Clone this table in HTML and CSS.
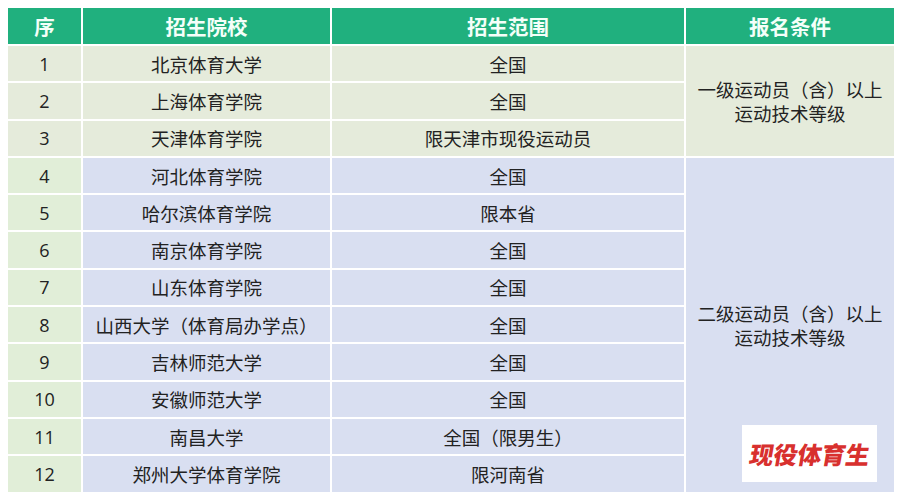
FILE: index.html
```html
<!DOCTYPE html>
<html lang="zh">
<head>
<meta charset="utf-8">
<link rel="stylesheet" href="styles.css">
</head>
<body>
<div class="wrap">
<table class="tbl">
  <colgroup>
    <col class="c1"><col class="c2"><col class="c3"><col class="c4">
  </colgroup>
  <thead>
    <tr><th>序</th><th>招生院校</th><th>招生范围</th><th>报名条件</th></tr>
  </thead>
  <tbody>
    <tr class="g"><td class="num">1</td><td>北京体育大学</td><td>全国</td><td rowspan="3" class="cond">一级运动员（含）以上<br>运动技术等级</td></tr>
    <tr class="g"><td class="num">2</td><td>上海体育学院</td><td>全国</td></tr>
    <tr class="g"><td class="num">3</td><td>天津体育学院</td><td>限天津市现役运动员</td></tr>
    <tr class="b"><td class="num">4</td><td>河北体育学院</td><td>全国</td><td rowspan="9" class="cond">二级运动员（含）以上<br>运动技术等级</td></tr>
    <tr class="b"><td class="num">5</td><td>哈尔滨体育学院</td><td>限本省</td></tr>
    <tr class="b"><td class="num">6</td><td>南京体育学院</td><td>全国</td></tr>
    <tr class="b"><td class="num">7</td><td>山东体育学院</td><td>全国</td></tr>
    <tr class="b"><td class="num">8</td><td>山西大学（体育局办学点）</td><td>全国</td></tr>
    <tr class="b"><td class="num">9</td><td>吉林师范大学</td><td>全国</td></tr>
    <tr class="b"><td class="num">10</td><td>安徽师范大学</td><td>全国</td></tr>
    <tr class="b"><td class="num">11</td><td>南昌大学</td><td>全国（限男生）</td></tr>
    <tr class="b"><td class="num">12</td><td>郑州大学体育学院</td><td>限河南省</td></tr>
  </tbody>
</table>
<div class="mark"><span>现役体育生</span></div>
</div>
</body>
</html>
```

FILE: styles.css
```css
html, body {
  margin: 0;
  padding: 0;
  background: #ffffff;
}
.wrap {
  position: relative;
  width: 900px;
  height: 500px;
  padding: 6px 0 0 6px;
  box-sizing: border-box;
}
.tbl {
  border-collapse: collapse;
  width: 888px;
  table-layout: fixed;
  font-family: "Noto Sans CJK SC", "Noto Sans", sans-serif;
  font-size: 18.5px;
  color: #222222;
}
.c1 { width: 75px; }
.c2 { width: 249px; }
.c3 { width: 354px; }
.c4 { width: 210px; }
.tbl th, .tbl td {
  border: 2px solid #ffffff;
  text-align: center;
  vertical-align: middle;
  padding: 0;
  line-height: 24px;
}
.tbl th {
  height: 36px;
  background: #20b07e;
  color: #f4fff9;
  font-weight: 700;
  font-size: 20.5px;
}
.tbl td {
  height: 35.3px;
}
.g td { background: #e5ebdb; }
.b td { background: #d9dff1; }
.b td.num { background: #e1eed8; }
.num {
  font-family: "Open Sans", "Noto Sans", sans-serif;
}
.tbl td.num { font-size: 18px; }
.cond { line-height: 27px; }
.mark {
  position: absolute;
  left: 742px;
  top: 425px;
  width: 135px;
  height: 57px;
  background: #ffffff;
  color: #d8302e;
  font-family: "Noto Sans CJK SC", sans-serif;
  font-weight: 900;
  font-size: 24px;
  display: flex;
  align-items: center;
  justify-content: center;
}
.mark span {
  display: inline-block;
  transform: skewX(-10deg);
}
```
